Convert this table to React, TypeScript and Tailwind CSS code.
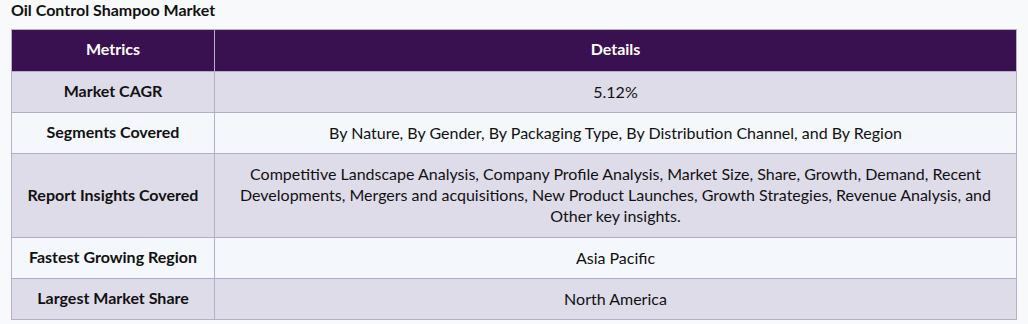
const rows = [
  { metric: "Market CAGR", details: "5.12%" },
  {
    metric: "Segments Covered",
    details: "By Nature, By Gender, By Packaging Type, By Distribution Channel, and By Region",
  },
  {
    metric: "Report Insights Covered",
    details:
      "Competitive Landscape Analysis, Company Profile Analysis, Market Size, Share, Growth, Demand, Recent Developments, Mergers and acquisitions, New Product Launches, Growth Strategies, Revenue Analysis, and Other key insights.",
    tall: true,
  },
  { metric: "Fastest Growing Region", details: "Asia Pacific" },
  { metric: "Largest Market Share", details: "North America" },
];

const App = () => {
  return (
    <div className="w-[1028px] h-[324px] bg-[#f8f9fb] text-[#111] font-['Lato','Liberation_Sans',sans-serif] overflow-hidden">
      <h1 className="pl-[11px] h-[29px] text-[16px] font-bold leading-[20px] text-[#111]">
        Oil Control Shampoo Market
      </h1>
      <div className="ml-[11px] w-[1006px] border border-[#b7afc8] text-[16px]">
        <div className="flex h-[41px] bg-[#3a1150] text-white font-bold pb-[3px]">
          <div className="w-[203px] flex items-center justify-center border-r border-[#b7afc8] -mb-[3px] pb-[3px]">Metrics</div>
          <div className="flex-1 flex items-center justify-center">Details</div>
        </div>
        {rows.map((r, i) => (
          <div
            key={r.metric}
            className={`flex border-t border-[#b3adc4] ${r.tall ? "h-[84px]" : "h-[41px]"} ${
              i % 2 === 0 ? "bg-[#dfdcea]" : "bg-[#f4f7fb]"
            }`}
          >
            <div className="w-[203px] flex items-center justify-center font-bold border-r border-[#b7afc8] pb-[2px]">
              {r.metric}
            </div>
            <div className="flex-1 flex items-center justify-center text-center px-[22px] leading-[21px] pb-[2px]">
              {r.details}
            </div>
          </div>
        ))}
      </div>
    </div>
  );
};

export default App;
